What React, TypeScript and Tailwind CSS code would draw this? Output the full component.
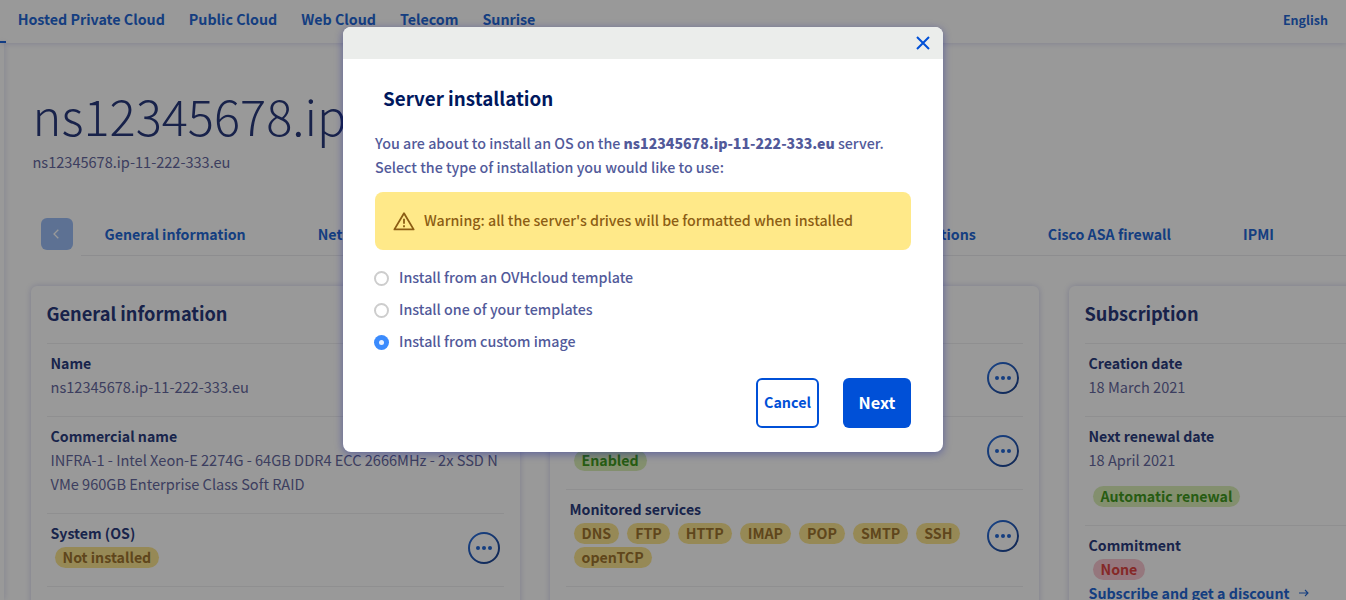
import React from "react";

type Tone = "warning" | "success" | "error";

const toneClasses: Record<Tone, string> = {
  warning: "bg-[#fbe58f] text-[#9f7530]",
  success: "bg-[#daefb8] text-[#419a1e]",
  error: "bg-[#f8c6d0] text-[#de4442]",
};

function Badge({ tone, children }: { tone: Tone; children: React.ReactNode }) {
  return (
    <span className={`mt-[2px] h-[21px] rounded-full px-2 text-[14.2px] leading-[20px] font-bold ${toneClasses[tone]}`}>
      {children}
    </span>
  );
}

function Badges({ tone, labels }: { tone: Tone; labels: string[] }) {
  return (
    <div className="-mr-6 ml-1 flex flex-wrap gap-x-2">
      {labels.map((label) => (
        <div key={label} className="flex h-6 items-start">
          <Badge tone={tone}>{label}</Badge>
        </div>
      ))}
    </div>
  );
}

function MoreButton() {
  return (
    <button className="mt-[6px] ml-auto size-8 shrink-0 self-center" aria-label="More actions">
      <svg viewBox="0 0 32 32" className="size-8">
        <defs>
          <linearGradient id="ring" x1="0" y1="0" x2="1" y2="1">
            <stop offset="0" stopColor="#2a72e4" />
            <stop offset="1" stopColor="#1c3f86" />
          </linearGradient>
        </defs>
        <circle cx="16" cy="16" r="15" fill="none" stroke="url(#ring)" strokeWidth="2" />
        <circle cx="10" cy="16" r="2" fill="#2468d6" />
        <circle cx="16" cy="16" r="2" fill="#2468d6" />
        <circle cx="22" cy="16" r="2" fill="#2468d6" />
      </svg>
    </button>
  );
}

function Item({ title, action, children }: { title: string; action?: boolean; children: React.ReactNode }) {
  return (
    <div className="flex border-t border-[#efeff0] pt-[7px] pr-1 pb-[17px] pl-[3.5px]">
      <div className="min-w-0 flex-1">
        <div className="text-[14.15px] leading-6 font-bold text-[#2b3c7e]">{title}</div>
        <div className="text-[14.58px] leading-6 text-[#65689e]">{children}</div>
      </div>
      {action && <MoreButton />}
    </div>
  );
}

function Card({ title, className, children }: { title: string; className: string; children: React.ReactNode }) {
  return (
    <section className={`h-[360px] shrink-0 rounded-md bg-white px-4 shadow-[0_0_6px_rgba(0,14,156,0.18)] ${className}`}>
      <h2 className="-ml-[0.5px] h-[57px] pt-[15px] text-[18.2px] leading-6 font-bold text-[#28397c]">{title}</h2>
      {children}
    </section>
  );
}

function Option({ label, checked }: { label: string; checked?: boolean }) {
  return (
    <label className="flex h-8 items-center">
      {checked ? (
        <span className="mt-px -ml-px flex size-[15px] items-center justify-center rounded-full bg-[#3b8bfd]">
          <span className="size-[5px] rounded-full bg-[#e8f1ff]" />
        </span>
      ) : (
        <span className="mt-px -ml-px size-[15px] rounded-full border-2 border-[#cdcdcd] bg-white" />
      )}
      <span className="mb-[2px] ml-[10px]">{label}</span>
    </label>
  );
}

function Dialog() {
  return (
    <div className="h-[425px] w-[600px] overflow-hidden rounded-lg bg-white shadow-[0_2px_8px_rgba(0,14,156,0.4)]">
      <div className="flex h-8 items-center justify-end bg-[#ebedeb] pr-[13px]">
        <svg viewBox="0 0 14 14" className="size-[14px]" fill="none" stroke="#0050d7" strokeWidth="2">
          <path d="M1 1l12 12M13 1L1 13" />
        </svg>
      </div>
      <div className="px-8 text-[14.28px] leading-6 font-medium text-[#525a9a]">
        <h1 className="pt-[27px] pl-2 text-[18.8px] leading-6 font-bold text-[#00185e]">Server installation</h1>
        <p className="pt-[21px]">
          You are about to install an OS on the <b className="text-[14.1px] font-black">ns12345678.ip-11-222-333.eu</b> server.
          <br />
          Select the type of installation you would like to use:
        </p>
        <div className="mt-[13px] flex h-[58px] items-center rounded-lg bg-[#ffe989] pl-[18px] text-[14.23px] text-[#8c5d14]">
          <svg viewBox="0 0 22 19" className="mr-[9px] h-[19px] w-[22px]" fill="none" stroke="#8c5d14" strokeWidth="1.8">
            <path strokeLinejoin="round" d="M11 1.2L20.6 17.4H1.4z" />
            <path d="M11 6.8v5M11 13.2v2" />
          </svg>
          <span className="mb-[2px]">Warning: all the server's drives will be formatted when installed</span>
        </div>
        <div className="mt-3">
          <Option label="Install from an OVHcloud template" />
          <Option label="Install one of your templates" />
          <Option label="Install from custom image" checked />
        </div>
        <div className="mt-5 flex justify-end gap-6">
          <button className="h-[50px] w-[63px] rounded-md border-2 border-[#0050d7] pb-[2px] text-[14.3px] font-bold text-[#0050d7]">
            Cancel
          </button>
          <button className="h-[50px] w-[68px] rounded-md bg-[#0050d7] pb-[2px] text-[16.3px] font-bold text-white">
            Next
          </button>
        </div>
      </div>
    </div>
  );
}

export default function App() {
  return (
    <div className="relative h-[600px] w-[1346px] overflow-hidden bg-white font-['Noto_Sans_CJK_SC',sans-serif]">
      <header className="relative flex h-[43px] shadow-[0_0_6px_rgba(0,14,156,0.18)]">
        <div className="mt-[41px] h-[2px] w-[6px] bg-[#1f66dc]" />
        <nav className="ml-[11.7px] flex gap-6 pt-[7px] text-[14.25px] leading-6 font-bold text-[#2468d6]">
          <a>Hosted Private Cloud</a>
          <a>Public Cloud</a>
          <a>Web Cloud</a>
          <a>Telecom</a>
          <a>Sunrise</a>
        </nav>
        <a className="mr-[18px] ml-auto pt-2 text-[12.5px] leading-6 font-bold text-[#2468d6]">English</a>
      </header>
      <div className="flex h-[557px]">
        <aside className="w-1 shrink-0 bg-white shadow-[0_0_6px_rgba(0,14,156,0.18)]" />
        <main className="flex min-w-0 flex-1 flex-col">
          <h1 className="mt-[42px] ml-[28.5px] h-[60px] text-[48.8px] leading-[60px] font-light text-[#28397c]">
            ns12345678.ip-11-222-333.eu
          </h1>
          <p className="mt-[5px] ml-[28.5px] text-[14.56px] leading-6 text-[#65689e]">ns12345678.ip-11-222-333.eu</p>
          <div className="mt-[44px] flex h-[38px] shrink-0">
            <button className="mr-2 ml-[37px] flex size-8 items-center justify-center rounded-md bg-[#9bbdf6]">
              <svg viewBox="0 0 6 10" className="mr-[2px] h-[10px] w-[6px]" fill="none" stroke="#fff" strokeWidth="1.3">
                <path d="M5.3 0.7L1 5l4.3 4.3" />
              </svg>
            </button>
            <nav className="flex flex-1 gap-[72px] border-b border-[#ebebee] pr-[72px] pl-[23.5px] text-[14.2px] leading-8 font-bold text-[#2468d6]">
              <a>General information</a>
              <a>Network interfaces</a>
              <a className="ml-auto">Interventions</a>
              <a>Cisco ASA firewall</a>
              <a>IPMI</a>
            </nav>
          </div>
          <div className="mt-[30px] ml-[27px] flex gap-[30px]">
            <Card title="General information" className="w-[489px]">
              <Item title="Name">ns12345678.ip-11-222-333.eu</Item>
              <Item title="Commercial name">
                <div className="whitespace-nowrap">
                  INFRA-1 - Intel Xeon-E 2274G - 64GB DDR4 ECC 2666MHz - 2x SSD N
                  <br />
                  VMe 960GB Enterprise Class Soft RAID
                </div>
              </Item>
              <Item title="System (OS)" action>
                <Badges tone="warning" labels={["Not installed"]} />
              </Item>
              <div className="border-t border-[#efeff0]" />
            </Card>
            <Card title="Service status" className="w-[489px]">
              <Item title="Server status" action>
                <Badges tone="success" labels={["Online"]} />
              </Item>
              <Item title="Monitoring" action>
                <Badges tone="success" labels={["Enabled"]} />
              </Item>
              <Item title="Monitored services" action>
                <Badges tone="warning" labels={["DNS", "FTP", "HTTP", "IMAP", "POP", "SMTP", "SSH", "openTCP"]} />
              </Item>
              <div className="border-t border-[#efeff0]" />
            </Card>
            <Card title="Subscription" className="w-[489px]">
              <Item title="Creation date">18 March 2021</Item>
              <Item title="Next renewal date">
                18 April 2021
                <div className="mt-3">
                  <Badges tone="success" labels={["Automatic renewal"]} />
                </div>
              </Item>
              <Item title="Commitment">
                <Badges tone="error" labels={["None"]} />
                <a className="flex items-center text-[14.28px] font-bold text-[#2468d6]">
                  Subscribe and get a discount
                  <svg viewBox="0 0 10 8" className="ml-[9px] h-2 w-[10px]" fill="none" stroke="#2468d6" strokeWidth="1.1">
                    <path d="M0 4h9M6 1l3 3-3 3" />
                  </svg>
                </a>
              </Item>
            </Card>
          </div>
        </main>
      </div>
      <div className="absolute inset-0 flex items-start bg-black/40 pt-[27px] pl-[343px]">
        <Dialog />
      </div>
    </div>
  );
}
